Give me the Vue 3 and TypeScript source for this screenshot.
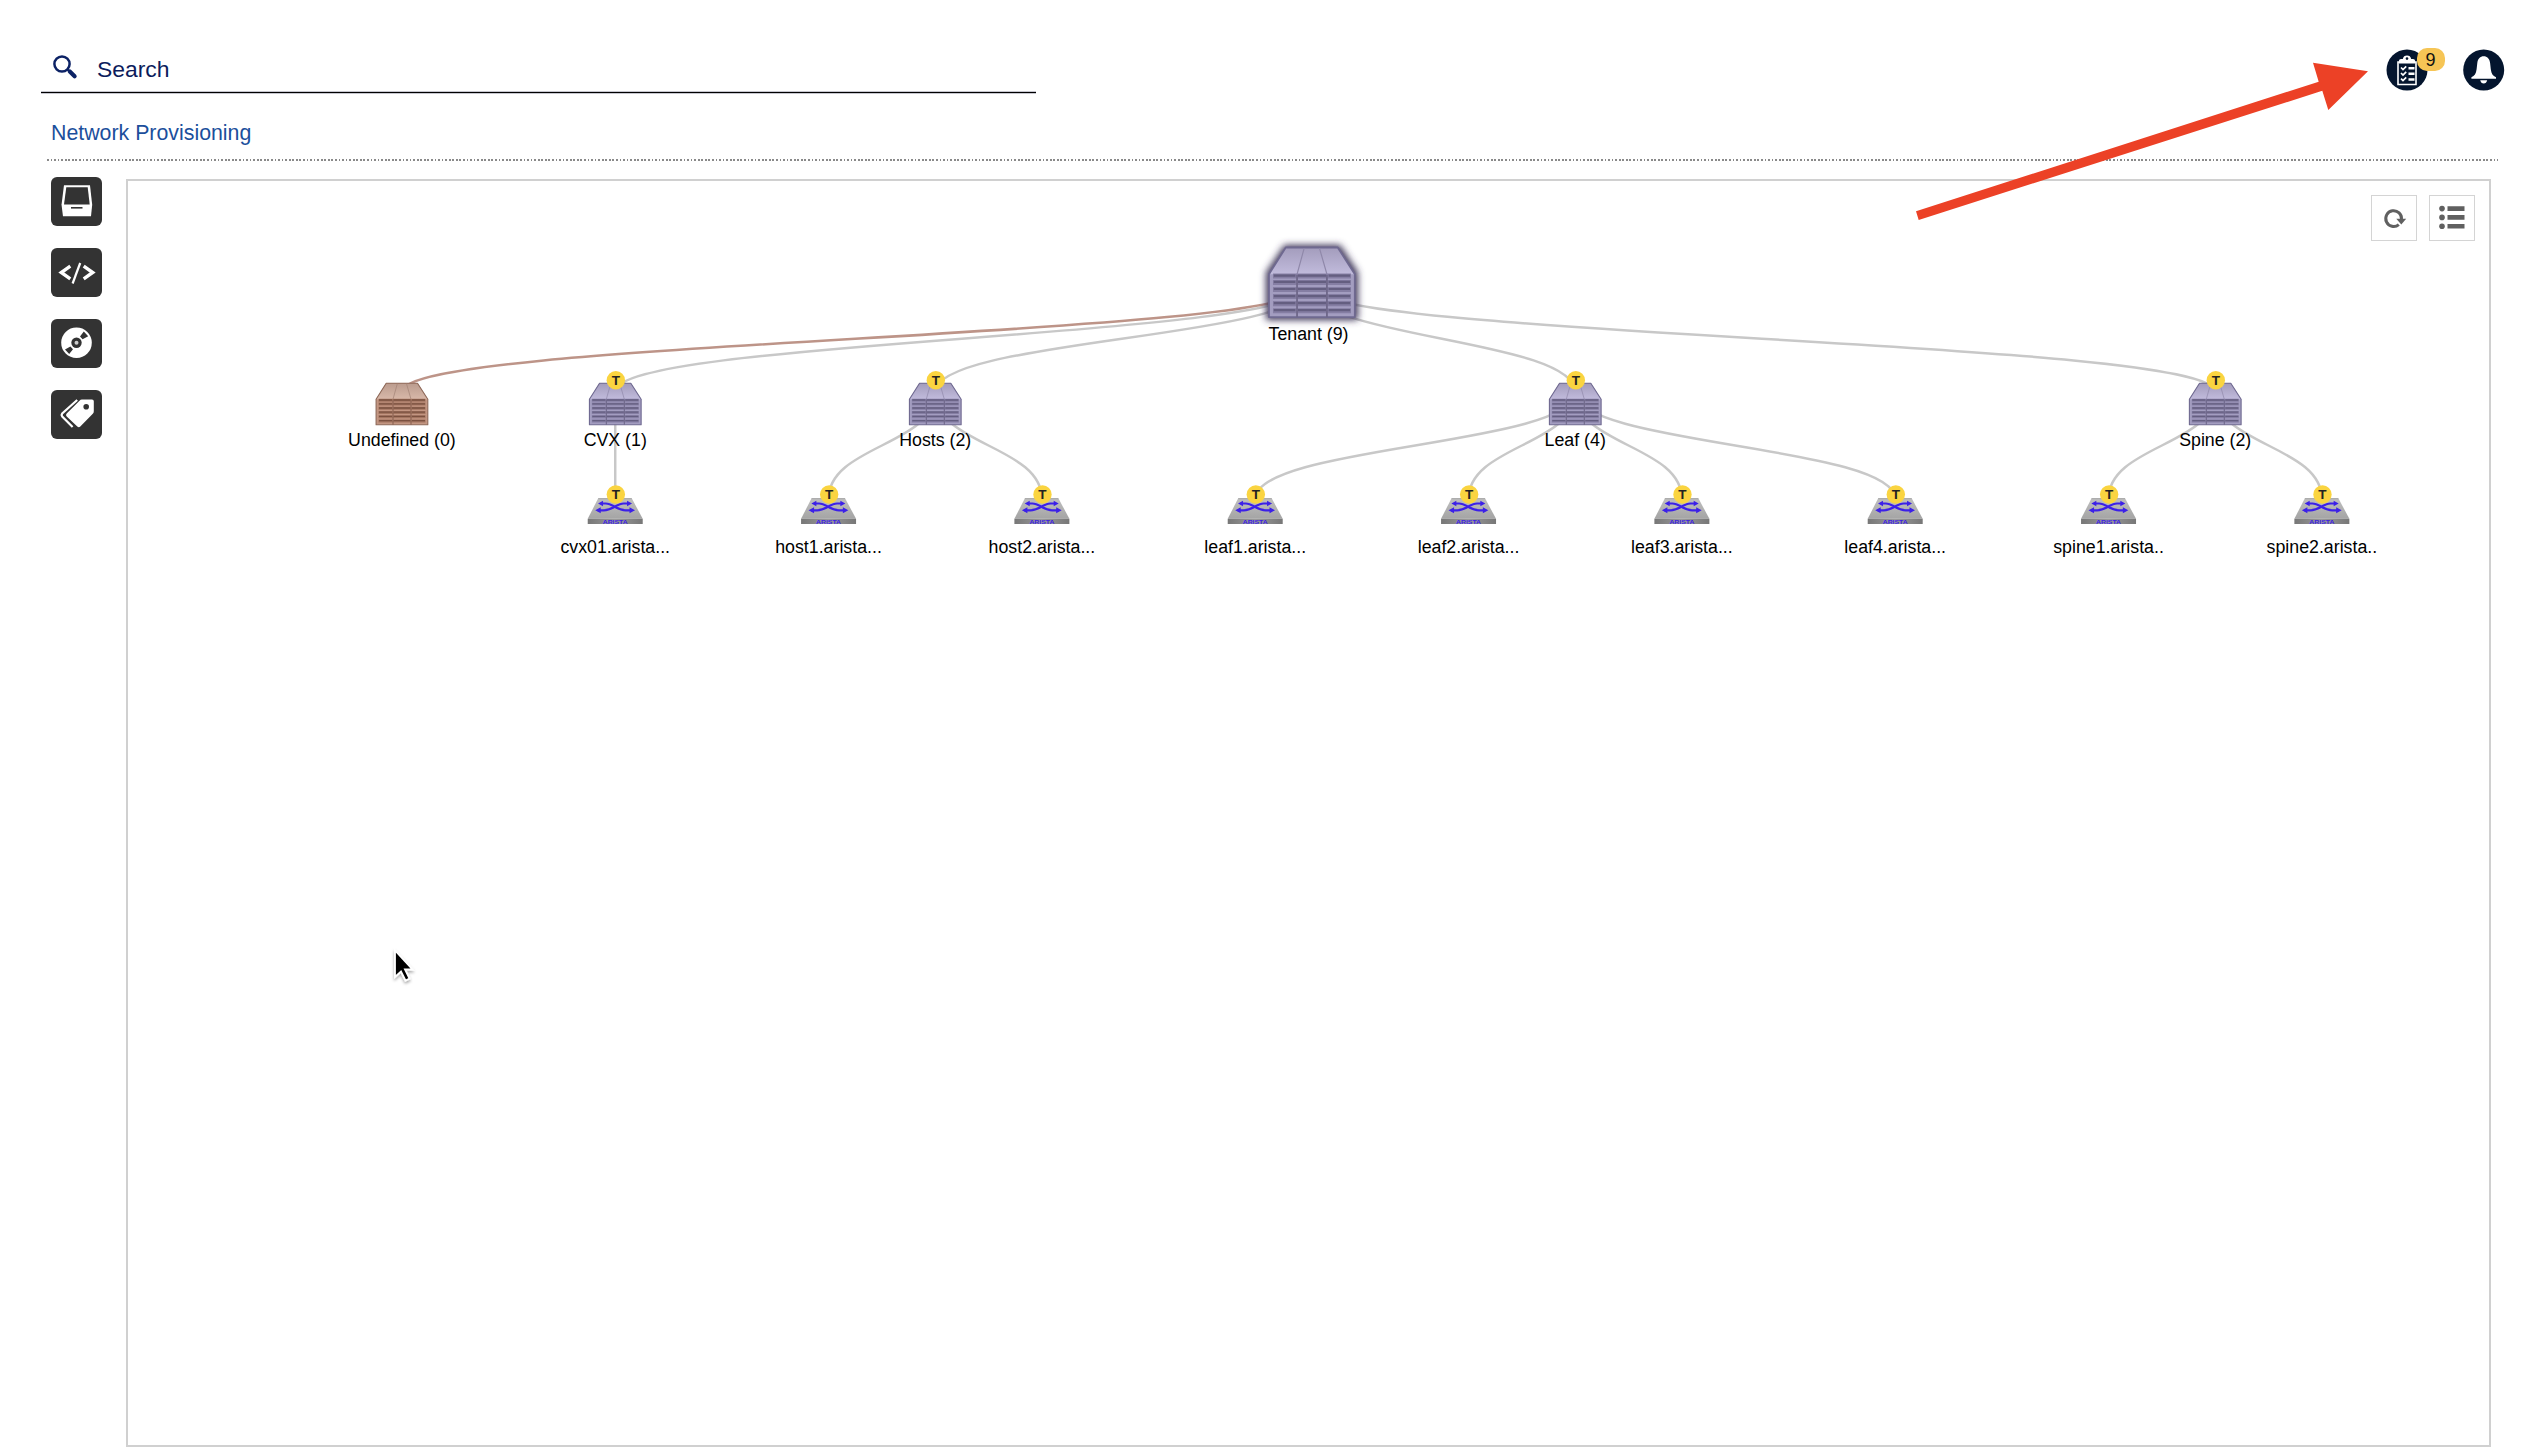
<script setup lang="ts">
interface TreeNode {
  id: string
  label: string
  x: number
  y: number
  kind: 'container' | 'device'
  tone?: 'violet' | 'rust'
  badge?: boolean
}

const STEP = 213.33
const BASE = 401.9
const col = (n: number): number => BASE + n * STEP

const nodes: TreeNode[] = [
  { id: 'undefined', label: 'Undefined (0)', x: col(0), y: 392, kind: 'container', tone: 'rust' },
  { id: 'cvx', label: 'CVX (1)', x: col(1), y: 392, kind: 'container', tone: 'violet', badge: true },
  { id: 'hosts', label: 'Hosts (2)', x: col(2.5), y: 392, kind: 'container', tone: 'violet', badge: true },
  { id: 'leaf', label: 'Leaf (4)', x: col(5.5), y: 392, kind: 'container', tone: 'violet', badge: true },
  { id: 'spine', label: 'Spine (2)', x: col(8.5), y: 392, kind: 'container', tone: 'violet', badge: true },
  { id: 'cvx01', label: 'cvx01.arista...', x: col(1), y: 499, kind: 'device' },
  { id: 'host1', label: 'host1.arista...', x: col(2), y: 499, kind: 'device' },
  { id: 'host2', label: 'host2.arista...', x: col(3), y: 499, kind: 'device' },
  { id: 'leaf1', label: 'leaf1.arista...', x: col(4), y: 499, kind: 'device' },
  { id: 'leaf2', label: 'leaf2.arista...', x: col(5), y: 499, kind: 'device' },
  { id: 'leaf3', label: 'leaf3.arista...', x: col(6), y: 499, kind: 'device' },
  { id: 'leaf4', label: 'leaf4.arista...', x: col(7), y: 499, kind: 'device' },
  { id: 'spine1', label: 'spine1.arista..', x: col(8), y: 499, kind: 'device' },
  { id: 'spine2', label: 'spine2.arista..', x: col(9), y: 499, kind: 'device' },
]
const containers = nodes.filter((n) => n.kind === 'container')
const devices = nodes.filter((n) => n.kind === 'device')

const root = { x: col(4.25), y: 285.5 }
const parents: Record<string, string[]> = {
  cvx: ['cvx01'],
  hosts: ['host1', 'host2'],
  leaf: ['leaf1', 'leaf2', 'leaf3', 'leaf4'],
  spine: ['spine1', 'spine2'],
}
const find = (id: string): TreeNode => nodes.find((n) => n.id === id) as TreeNode

function curve(a: { x: number; y: number }, b: { x: number; y: number }): string {
  const m = (a.y + b.y) / 2
  return `M${a.x},${a.y}C${a.x},${m} ${b.x},${m} ${b.x},${b.y}`
}

const links = [
  ...containers.slice(1).map((c) => ({ d: curve(root, c), rust: false })),
  { d: curve(root, containers[0]), rust: true },
  ...Object.entries(parents).flatMap(([p, kids]) =>
    kids.map((k) => ({ d: curve(find(p), find(k)), rust: false })),
  ),
]
const shelves = [17.6, 21.4, 25.6, 29.8, 34, 38.2]
</script>

<template>
  <div class="page">
    <header class="topbar">
      <div class="search">
        <svg class="search-icon" width="26" height="26" viewBox="0 0 26 26">
          <circle cx="9" cy="10" r="7.6" fill="none" stroke="#0c2265" stroke-width="2.5" />
          <path d="M14 15L16 17" stroke="#0c2265" stroke-width="2" />
          <path d="M16.8 17.6L21.6 22.2" stroke="#0c2265" stroke-width="4.2" stroke-linecap="round" />
        </svg>
        <span>Search</span>
      </div>
      <div class="actions">
        <div class="round">
          <svg width="42" height="42" viewBox="0 0 42 42">
            <circle cx="21" cy="21" r="20.5" fill="#04152e" />
            <path d="M12 13h18v22.5H12z" fill="none" stroke="#fff" stroke-width="1.6" />
            <path d="M13 14.5V11.5q0-1.5 2-1.5h1.8a4.3 4.3 0 0 1 8.400 0H27q2 0 2 1.500v3z" fill="#fff" />
            <circle cx="21" cy="9.600" r="1.300" fill="#04152e" />
            <path d="M22.500 19.300h6M22.500 24.800h6M22.500 30.400h6" stroke="#fff" stroke-width="2.500" />
            <path d="M15 18.500l2 2 3.200-3.200M15 24l2 2 3.200-3.200M15 29.600l2 2 3.200-3.200" fill="none" stroke="#fff" stroke-width="1.700" />
          </svg>
          <span class="count">9</span>
        </div>
        <svg width="42" height="42" viewBox="0 0 42 42">
          <circle cx="20.700" cy="21" r="20.500" fill="#04152e" />
          <path d="M8.400 29.800v-1.500c3.200-1.200 4.600-3.600 5.200-8l.7-6.300c.5-4.500 3-6.800 6.400-6.800s5.900 2.300 6.400 6.800l.7 6.300c.6 4.400 2 6.800 5.200 8v1.500z" fill="#fff" />
          <path d="M17.200 31.300h7c-.4 2-1.800 3.300-3.500 3.300s-3.100-1.300-3.500-3.300z" fill="#fff" />
        </svg>
      </div>
    </header>
    <div class="crumb">Network Provisioning</div>
    <div class="dots"></div>

    <main class="body">
      <nav class="rail">
        <div class="tool">
          <svg width="51" height="49" viewBox="0 0 51 49">
            <path d="M13 8.300h26l2.200 19.500-1.200 11.500H12L10.500 27.800z" fill="#fff" />
            <path d="M15.300 10.200h21.400l2 17.200H13z" fill="#333" />
            <path d="M20 30.800h11.500" stroke="#333" stroke-width="1.600" />
          </svg>
        </div>
        <div class="tool">
          <svg width="51" height="49" viewBox="0 0 51 49" fill="none" stroke="#fff">
            <path d="M19.300 18.200L10.300 24.500L19.300 30.800M32.700 18.200L41.700 24.500L32.700 30.800" stroke-width="3.400" />
            <path d="M29.200 15L21.600 35.500" stroke-width="2.200" />
          </svg>
        </div>
        <div class="tool">
          <svg width="51" height="49" viewBox="0 0 51 49">
            <circle cx="25.500" cy="23.800" r="15.300" fill="#fff" />
            <circle cx="25.500" cy="23.800" r="5.200" fill="#333" />
            <circle cx="25.500" cy="23.800" r="2" fill="#ccc" />
            <path d="M29 17.500L32.800 12.400L37.200 17.200L31.600 20.200zM22 30.300L18.200 35L14 30.500L19.400 27.400z" fill="#333" />
          </svg>
        </div>
        <div class="tool">
          <svg width="51" height="49" viewBox="0 0 51 49">
            <path d="M26.200 10L11.200 23.500q-1.200 1.500 0 3L21.600 37" fill="none" stroke="#fff" stroke-width="2.200" />
            <path d="M31 9.500h10q1.800 0 1.800 1.800v10q0 1.500-1 2.500L29.300 36.600q-1.500 1.500-3 0L15.700 26.500q-1.500-1.500 0-3L28.500 10.800q1-1.300 2.500-1.300z" fill="#fff" />
            <circle cx="35.200" cy="16.700" r="2.800" fill="#333" />
          </svg>
        </div>
      </nav>

      <section class="panel">
        <div class="panel-tools">
          <div class="mini">
            <svg width="44" height="44" viewBox="0 0 44 44">
              <path d="M26.800 28.600A7.900 7.900 0 1 1 29.500 23.500" fill="none" stroke="#606060" stroke-width="3" />
              <path d="M24.300 22.800h9.900L29.300 28.400z" fill="#606060" />
            </svg>
          </div>
          <div class="mini">
            <svg width="44" height="44" viewBox="0 0 44 44" fill="#606060">
              <circle cx="12" cy="12.600" r="2.800" /><circle cx="12" cy="21.400" r="2.800" /><circle cx="12" cy="30.200" r="2.800" />
              <path d="M17.500 10.300h17v4.600h-17zM17.500 19.100h17v4.600h-17zM17.500 27.900h17v4.600h-17z" />
            </svg>
          </div>
        </div>

        <svg class="tree" width="2528" height="1456" viewBox="0 0 2528 1456">
          <defs>
            <linearGradient id="violetTop" x1="0" y1="0" x2="0" y2="1">
              <stop offset="0" stop-color="#a39cbc" /><stop offset="1" stop-color="#c1bbdc" />
            </linearGradient>
            <linearGradient id="rustTop" x1="0" y1="0" x2="0" y2="1">
              <stop offset="0" stop-color="#bb9c8e" /><stop offset="1" stop-color="#d8b8a9" />
            </linearGradient>
            <linearGradient id="deviceTop" x1="0" y1="0" x2="0" y2="1">
              <stop offset="0" stop-color="#c0c0c0" /><stop offset="1" stop-color="#a4a4a4" />
            </linearGradient>
            <linearGradient id="deviceFront" x1="0" y1="0" x2="1" y2="0">
              <stop offset="0" stop-color="#777" /><stop offset=".5" stop-color="#999" /><stop offset="1" stop-color="#777" />
            </linearGradient>
            <filter id="glow" x="-30%" y="-30%" width="160%" height="160%"><feGaussianBlur stdDeviation="3.600" /></filter>
            <filter id="cursorShadow" x="-50%" y="-50%" width="200%" height="200%">
              <feDropShadow dx="0" dy="2" stdDeviation="1.500" flood-opacity=".35" />
            </filter>
            <g id="violet">
              <path d="M10.700.6H42L52.300 16.500V42H.6V16.500z" fill="#a39dc0" />
              <path d="M10.700.6H42L52.300 16.500H.6z" fill="url(#violetTop)" />
              <path d="M10.700.6H42L52.300 16.500V42H.6V16.500z" fill="none" stroke="#6f6990" stroke-width="1.100" stroke-linejoin="round" />
              <path d="M21.800 1L17.500 16.500M31 1L35.500 16.500" stroke="#8f88a9" stroke-width=".7" />
              <g v-for="y in shelves" :key="y">
                <path :d="`M3 ${y}H50`" stroke="#857ea3" stroke-width="3" />
                <path :d="`M3.500 ${y - 0.3}H49.500`" stroke="#645e80" stroke-width="1.300" stroke-dasharray="13 1.500 17 1.500" />
              </g>
              <path d="M17.500 17V42M35.500 17V42" stroke="#6f688a" stroke-width="1.100" />
            </g>
            <g id="rust">
              <path d="M10.700.6H42L52.300 16.500V42H.6V16.500z" fill="#c39682" />
              <path d="M10.700.6H42L52.300 16.500H.6z" fill="url(#rustTop)" />
              <path d="M10.700.6H42L52.300 16.500V42H.6V16.500z" fill="none" stroke="#8e6959" stroke-width="1.100" stroke-linejoin="round" />
              <path d="M21.800 1L17.500 16.500M31 1L35.500 16.500" stroke="#a28376" stroke-width=".7" />
              <g v-for="y in shelves" :key="y">
                <path :d="`M3 ${y}H50`" stroke="#a37560" stroke-width="3" />
                <path :d="`M3.500 ${y - 0.3}H49.500`" stroke="#7b5140" stroke-width="1.300" stroke-dasharray="13 1.500 17 1.500" />
              </g>
              <path d="M17.500 17V42M35.500 17V42" stroke="#8b6352" stroke-width="1.100" />
            </g>
            <g id="device">
              <path d="M10.500 0H44L55 20.500H0z" fill="url(#deviceTop)" />
              <path d="M10.500.4H44" stroke="#999" stroke-width=".8" />
              <path d="M0 20.500H55V25.600H0z" fill="url(#deviceFront)" />
              <g fill="none" stroke="#3c20e8" stroke-width="2.200">
                <path d="M13 5.200h5c7 0 11 6.800 20 6.800h6M41 5.200h-5c-7 0-11 6.800-20 6.800h-6" />
              </g>
              <path d="M10.300 5.200l5-2.800v5.600zM44.300 5.200l-5-2.800v5.600zM7.500 12l5.500-3v6zM47.300 12l-5.500-3v6z" fill="#3c20e8" />
              <text x="27.500" y="25.400" class="brand" textLength="25" lengthAdjust="spacingAndGlyphs">ARISTA</text>
            </g>
          </defs>

          <path v-for="(l, i) in links" :key="i" :d="l.d" class="link" :class="{ rust: l.rust }" />

          <path d="M1285.500 247H1339L1356 273V318H1268V273z" fill="#3d3558" stroke="#3d3558" stroke-width="4" filter="url(#glow)" />
          <use href="#violet" transform="translate(1268 246.500) scale(1.660 1.680)" />
          <text :x="root.x" y="340" class="label">Tenant (9)</text>

          <g v-for="n in containers" :key="n.id">
            <use :href="n.tone === 'rust' ? '#rust' : '#violet'" :x="n.x - 26.400" y="382.700" />
            <g v-if="n.badge">
              <circle :cx="n.x + 0.600" cy="380.300" r="9.200" fill="#fad440" />
              <text :x="n.x + 0.600" y="385.200" class="tag">T</text>
            </g>
            <text :x="n.x" y="446" class="label">{{ n.label }}</text>
          </g>

          <g v-for="n in devices" :key="n.id">
            <use href="#device" :x="n.x - 27.500" y="498.300" />
            <circle :cx="n.x + 0.600" cy="494.500" r="9.200" fill="#fad440" />
            <text :x="n.x + 0.600" y="499.300" class="tag">T</text>
            <text :x="n.x" y="552.500" class="label">{{ n.label }}</text>
          </g>

          <path d="M395 950.500V977L401 971.500L405.500 980.500L409.500 978.500L405 969.500H412.500z" fill="#000" stroke="#fff" stroke-width="1.800" filter="url(#cursorShadow)" />
        </svg>
      </section>
    </main>

    <svg class="pointer" width="2528" height="240" viewBox="0 0 2528 240">
      <path d="M1916 211.200L2318.700 81.700L2313 62.700L2368 71.200L2328.300 110L2322.300 90.800L1918.700 220z" fill="#ec4126" />
    </svg>
  </div>
</template>

<style>
body { margin: 0; background: #fff; }
</style>

<style scoped>
.page {
  position: relative;
  box-sizing: border-box;
  width: 2528px;
  height: 1456px;
  overflow: hidden;
  background: #fff;
  display: flex;
  flex-direction: column;
  font-family: "Liberation Sans", Arial, sans-serif;
}
.topbar { display: flex; justify-content: space-between; height: 93px; flex: none; }
.search {
  box-sizing: border-box;
  display: flex;
  align-items: flex-end;
  gap: 18px;
  width: 995px;
  margin-left: 41px;
  padding: 0 0 8px 12px;
  border-bottom: 1px solid #000;
  box-shadow: 0 1px 0 #c6c6cf, inset 0 -1px 0 #c6c6cf;
  color: #0c1c5c;
  font-size: 22.900px;
  line-height: 30px;
}
.search-icon { margin-bottom: 4px; }
.actions { display: flex; gap: 35px; padding: 48.500px 23px 0 0; }
.round { position: relative; height: 42px; width: 42px; }
.count {
  position: absolute;
  left: 30.500px;
  top: -1px;
  width: 28px;
  height: 23px;
  border-radius: 10px;
  background: #f6c555;
  text-align: center;
  font-size: 18px;
  line-height: 24px;
  color: #111;
}
.crumb { margin-left: 51px; padding-top: 28px; height: 38px; font-size: 21.330px; line-height: 25px; color: #1c4f9c; flex: none; }
.dots {
  flex: none;
  height: 2px;
  margin: 0 30px 0 47px;
  background: repeating-linear-gradient(90deg, #8a8a8a 0 1.780px, transparent 1.780px 3.556px);
}
.body { display: flex; flex: none; padding: 18px 0 0 51px; gap: 24px; }
.rail { display: flex; flex-direction: column; gap: 22px; width: 51px; margin-top: -2px; }
.tool { width: 51.300px; height: 49px; border-radius: 6px; background: #333; }
.tool svg { display: block; }
.panel { box-sizing: border-box; width: 2365px; height: 1268px; border: 2px solid #d0d0d0; }
.panel-tools { display: flex; justify-content: flex-end; gap: 12px; padding: 14px 14px 0 0; }
.mini { box-sizing: border-box; width: 46px; height: 46px; border: 1px solid #d4d4d4; background: #fff; }
.mini svg { display: block; }
.tree, .pointer { position: absolute; left: 0; top: 0; pointer-events: none; }
.link { fill: none; stroke: #c8c8c8; stroke-width: 2.500; }
.link.rust { stroke: #bd9488; }
.label { font-size: 17.780px; text-anchor: middle; fill: #000; }
.tag { font-size: 13.500px; font-weight: 700; text-anchor: middle; fill: #222; }
.brand { font-size: 5.500px; font-weight: 700; text-anchor: middle; fill: #3c20e8; }
</style>
